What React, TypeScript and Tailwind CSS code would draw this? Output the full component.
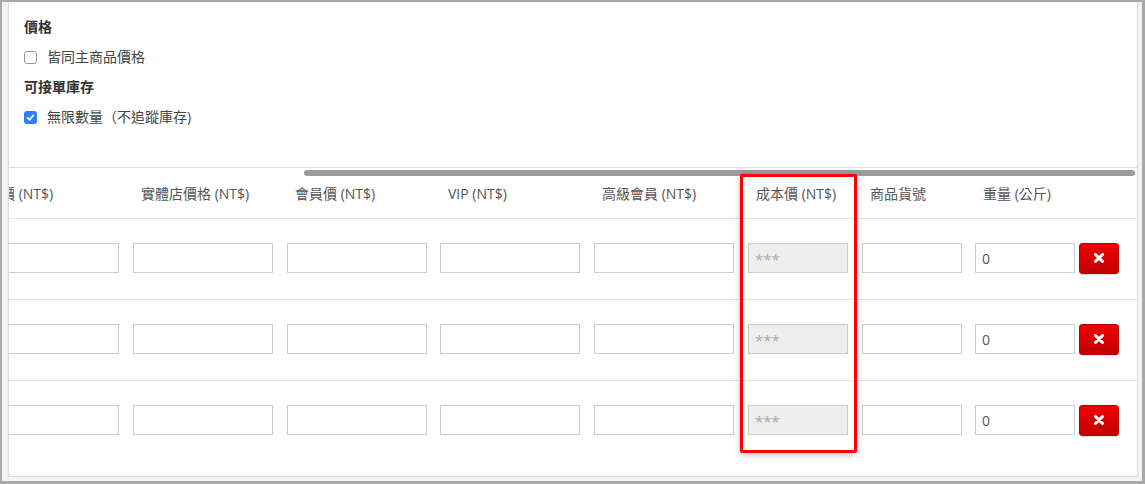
import React from "react";

// Column setup for the variant table (scrolled to the right end)
interface Column {
    label: string;
    cell: string;
    input: string;
    disabled?: boolean;
    value?: string;
    remove?: boolean;
}

const columns: Column[] = [
    { label: "售價 (NT$)", cell: "w-[154px]", input: "w-[140px]" },
    { label: "實體店價格 (NT$)", cell: "w-[154px]", input: "w-[140px]" },
    { label: "會員價 (NT$)", cell: "w-[153px]", input: "w-[140px]" },
    { label: "VIP (NT$)", cell: "w-[154px]", input: "w-[140px]" },
    { label: "高級會員 (NT$)", cell: "w-[154px]", input: "w-[140px]" },
    { label: "成本價 (NT$)", cell: "w-[114px]", input: "w-[100px]", disabled: true },
    { label: "商品貨號", cell: "w-[113px]", input: "w-[100px]" },
    { label: "重量 (公斤)", cell: "w-[168px]", input: "w-[100px]", value: "0", remove: true },
];

const rows = [1, 2, 3];

function Checkbox({ checked }: { checked?: boolean }) {
    if (checked) {
        return (
            <span className="flex h-[13px] w-[13px] shrink-0 items-center justify-center rounded-[3px] bg-[#2e7cf6]">
                <svg width="11" height="11" viewBox="0 0 11 11" fill="none">
                    <path d="M2.6 5.8 L4.6 7.8 L8.4 3.3" stroke="white" strokeWidth="1.7" strokeLinecap="round" strokeLinejoin="round" />
                </svg>
            </span>
        );
    }
    return <span className="h-[13px] w-[13px] shrink-0 rounded-[3px] border border-[#9a9a9a] bg-white" />;
}

function DeleteButton() {
    return (
        <button className="ml-[4px] flex h-[31px] w-[40px] shrink-0 items-center justify-center rounded-[3px] border border-[#b80000] bg-gradient-to-b from-[#f00000] to-[#c20000] shadow-[0_1px_1px_rgba(0,0,0,0.15)]">
            <svg width="10" height="10" viewBox="0 0 10 10">
                <path d="M1.5 1.5 L8.5 8.5 M8.5 1.5 L1.5 8.5" stroke="white" strokeWidth="3" strokeLinecap="round" />
            </svg>
        </button>
    );
}

export default function App() {
    return (
        <div className="relative h-[484px] w-[1145px] overflow-hidden border-b-[3px] border-l-2 border-r-[3px] border-t-2 border-[#a9a9a9] bg-[#f4f4f4] font-['Open_Sans','Noto_Sans_CJK_TC',sans-serif] text-[14px]">
            <div className="ml-[6px] mr-[4px] flex h-[475px] flex-col overflow-hidden border-b border-l border-r border-[#dddddd] bg-white">
                {/* Price / stock options */}
                <div className="flex h-[166px] shrink-0 flex-col gap-[10px] border-b border-[#e0e0e0] pl-[15px] pt-[15px]">
                    <div className="h-5 font-bold leading-5 text-[#333]">價格</div>
                    <label className="flex h-5 items-center gap-[10px] leading-5 text-[#444]">
                        <Checkbox />
                        <span>皆同主商品價格</span>
                    </label>
                    <div className="h-5 font-bold leading-5 text-[#333]">可接單庫存</div>
                    <label className="flex h-5 items-center gap-[10px] leading-5 text-[#444]">
                        <Checkbox checked />
                        <span>無限數量（不追蹤庫存)</span>
                    </label>
                </div>

                {/* Scrollable variant table */}
                <div className="flex flex-1 flex-col overflow-hidden">
                    <div className="h-[8px] shrink-0 pl-[295px] pt-[2px]">
                        <div className="h-[6px] w-[831px] rounded-full bg-[#9b9b9b]" />
                    </div>
                    <div className="-ml-[37px] flex flex-1 flex-col">
                        <div className="flex h-[43px] shrink-0 border-b border-[#e3e3e3]">
                            {columns.map((col) => (
                                <div key={col.label} className={`${col.cell} shrink-0 whitespace-nowrap pl-[15px] pt-[8px] leading-5 text-[#555]`}>
                                    {col.label}
                                </div>
                            ))}
                        </div>
                        {rows.map((row, i) => (
                            <div
                                key={row}
                                className={i < rows.length - 1 ? "flex h-[81px] shrink-0 border-b border-[#e3e3e3] pt-[24px]" : "flex flex-1 pt-[24px]"}
                            >
                                {columns.map((col) => (
                                    <div key={col.label} className={`${col.cell} flex h-[30px] shrink-0 items-center px-[7px]`}>
                                        <div
                                            className={`${col.input} flex h-[30px] shrink-0 items-center border border-[#cccccc] pl-[6px] ${col.disabled ? "bg-[#eeeeee] pt-[3px] text-[15px] text-[#aaaaaa]" : "bg-white text-[#555]"}`}
                                        >
                                            {col.disabled ? "***" : col.value}
                                        </div>
                                        {col.remove && <DeleteButton />}
                                    </div>
                                ))}
                            </div>
                        ))}
                    </div>
                </div>
            </div>

            {/* Red annotation around the cost column */}
            <div className="absolute left-[738px] top-[172px] h-[279px] w-[117px] rounded-[2px] border-[3px] border-[#ff0000] shadow-[0_2px_6px_rgba(0,0,0,0.25)]" />
        </div>
    );
}
